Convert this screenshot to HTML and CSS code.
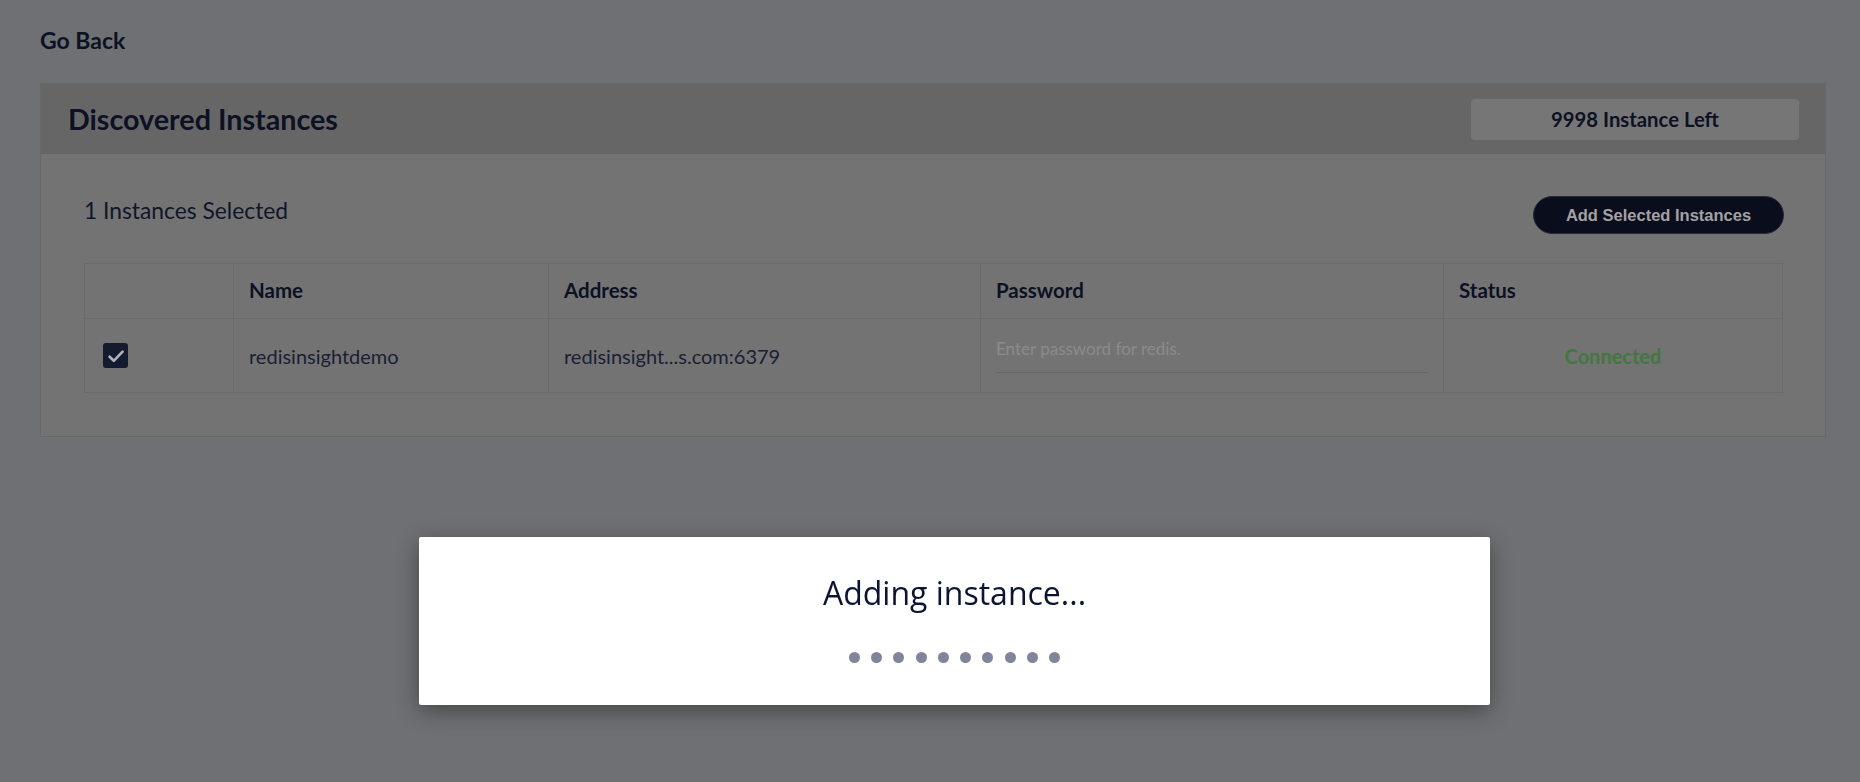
FILE: index.html
```html
<!DOCTYPE html>
<html lang="en">
<head>
<meta charset="utf-8">
<title>Discovered Instances</title>
<link rel="stylesheet" href="styles.css">
</head>
<body>
<div class="page">
  <a class="back">Go Back</a>
  <section class="card">
    <header class="card-head">
      <h1 class="card-title">Discovered Instances</h1>
      <div class="badge">9998 Instance Left</div>
    </header>
    <div class="card-body">
      <div class="toolbar">
        <span class="count">1 Instances Selected</span>
        <button class="btn">Add Selected Instances</button>
      </div>
      <table class="grid">
        <colgroup>
          <col class="c-check"><col class="c-name"><col class="c-addr"><col class="c-pass"><col class="c-status">
        </colgroup>
        <thead>
          <tr><th></th><th>Name</th><th>Address</th><th>Password</th><th>Status</th></tr>
        </thead>
        <tbody>
          <tr>
            <td><span class="checkbox"><svg viewBox="0 0 24 24" width="22" height="22"><path d="M5 12.8l4.6 4.4L19.2 7.2" fill="none" stroke="#b3b4b8" stroke-width="2.8" stroke-linecap="round" stroke-linejoin="round"/></svg></span></td>
            <td>redisinsightdemo</td>
            <td>redisinsight...s.com:6379</td>
            <td class="pass-cell"><div class="pass-input">Enter password for redis.</div></td>
            <td class="status">Connected</td>
          </tr>
        </tbody>
      </table>
    </div>
  </section>
</div>
<div class="overlay">
  <div class="modal">
    <p class="modal-title">Adding instance...</p>
    <div class="dots"><span></span><span></span><span></span><span></span><span></span><span></span><span></span><span></span><span></span><span></span></div>
  </div>
</div>
</body>
</html>
```
FILE: styles.css
```css
* { box-sizing: border-box; }
html, body { margin: 0; height: 100%; }
body {
  background: #6f7073;
  font-family: Lato, "Open Sans", sans-serif;
  color: #0c1124;
  overflow: hidden;
}
.page {
  padding: 28px 34px 0 40px;
}
.back {
  display: block;
  font-size: 23px;
  line-height: 24px;
  font-weight: 700;
  color: #0c1124;
  margin-bottom: 31px;
}
.card {
  border: 1px solid #686868;
  background: #737373;
}
.card-head {
  height: 70px;
  background: #666666;
  display: flex;
  align-items: center;
  justify-content: space-between;
  padding: 0 26px 0 27px;
}
.card-title {
  margin: 0;
  font-size: 28.7px;
  font-weight: 700;
  color: #0c1124;
}
.badge {
  width: 328px;
  height: 41px;
  border-radius: 4px;
  background: #767676;
  display: flex;
  align-items: center;
  justify-content: center;
  font-size: 20.3px;
  font-weight: 700;
  color: #0c1124;
}
.card-body {
  padding: 42px 42px 43px 43px;
}
.toolbar {
  height: 38px;
  display: flex;
  align-items: center;
  justify-content: space-between;
  margin-bottom: 29px;
}
.count {
  font-size: 22.8px;
  color: #10162a;
  margin-left: 0;
  margin-top: -11px;
}
.btn {
  width: 251px;
  height: 38px;
  border-radius: 19px;
  border: 1px solid #23283a;
  background: #0a0e1c;
  color: #a2a2a4;
  font-family: "Liberation Sans", Arial, sans-serif;
  font-weight: 700;
  font-size: 16.5px;
  margin-right: -1px;
  padding: 0;
}
.grid {
  width: 100%;
  border-collapse: collapse;
  table-layout: fixed;
  border: 1px solid #6b6b6b;
}
.c-check { width: 149px; }
.c-name { width: 315px; }
.c-addr { width: 432px; }
.c-pass { width: 463px; }
.grid th, .grid td {
  border: 1px solid #6b6b6b;
  text-align: left;
  padding: 0 15px;
  font-size: 20px;
}
.grid th {
  height: 55px;
  font-size: 20.5px;
  font-weight: 700;
  color: #0c1124;
  padding-bottom: 2px;
}
.grid td {
  height: 74px;
  color: #1a2034;
}
.checkbox {
  display: flex;
  align-items: center;
  justify-content: center;
  width: 25px;
  height: 25px;
  border-radius: 3px;
  background: #151b2f;
  margin-left: 3px;
}
.pass-cell { vertical-align: top; }
.pass-input {
  margin-top: 17px;
  height: 37px;
  border-bottom: 1px solid #656565;
  font-size: 17px;
  color: #8b8b8d;
  line-height: 26px;
}
.grid td.status {
  text-align: center;
  font-weight: 700;
  color: #42773f;
}
.overlay {
  position: fixed;
  inset: 0;
}
.modal {
  position: absolute;
  left: 419px;
  top: 537px;
  width: 1071px;
  height: 168px;
  background: #ffffff;
  border-radius: 2px;
  box-shadow: 0 6px 22px rgba(0, 0, 0, 0.38);
  padding-top: 35px;
  text-align: center;
}
.modal-title {
  margin: 0;
  font-family: "Open Sans", Lato, sans-serif;
  font-size: 32px;
  line-height: 42px;
  font-weight: 400;
  color: #0b1533;
}
.dots {
  margin-top: 38px;
  display: flex;
  justify-content: center;
  gap: 11.3px;
}
.dots span {
  width: 11px;
  height: 11px;
  border-radius: 50%;
  background: #80859a;
}
```
